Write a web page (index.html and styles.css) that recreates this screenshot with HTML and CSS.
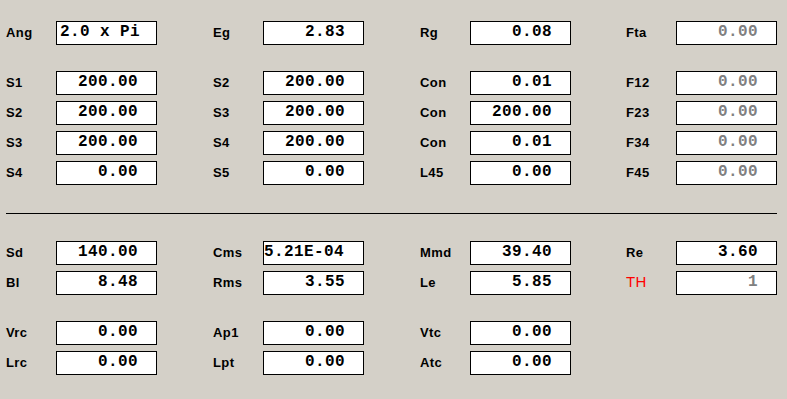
FILE: index.html
```html
<!DOCTYPE html>
<html>
<head>
<meta charset="utf-8">
<link rel="stylesheet" href="styles.css">
</head>
<body>
<div class="panel">
  <div class="group g-top">
    <div class="field"><span class="lbl">Ang</span><span class="box left">2.0 x Pi</span></div>
    <div class="field"><span class="lbl">Eg</span><span class="box">2.83</span></div>
    <div class="field"><span class="lbl">Rg</span><span class="box">0.08</span></div>
    <div class="field"><span class="lbl">Fta</span><span class="box dim">0.00</span></div>
  </div>
  <div class="group g-mid">
    <div class="field"><span class="lbl">S1</span><span class="box">200.00</span></div>
    <div class="field"><span class="lbl">S2</span><span class="box">200.00</span></div>
    <div class="field"><span class="lbl">Con</span><span class="box">0.01</span></div>
    <div class="field"><span class="lbl">F12</span><span class="box dim">0.00</span></div>

    <div class="field"><span class="lbl">S2</span><span class="box">200.00</span></div>
    <div class="field"><span class="lbl">S3</span><span class="box">200.00</span></div>
    <div class="field"><span class="lbl">Con</span><span class="box">200.00</span></div>
    <div class="field"><span class="lbl">F23</span><span class="box dim">0.00</span></div>

    <div class="field"><span class="lbl">S3</span><span class="box">200.00</span></div>
    <div class="field"><span class="lbl">S4</span><span class="box">200.00</span></div>
    <div class="field"><span class="lbl">Con</span><span class="box">0.01</span></div>
    <div class="field"><span class="lbl">F34</span><span class="box dim">0.00</span></div>

    <div class="field"><span class="lbl">S4</span><span class="box">0.00</span></div>
    <div class="field"><span class="lbl">S5</span><span class="box">0.00</span></div>
    <div class="field"><span class="lbl">L45</span><span class="box">0.00</span></div>
    <div class="field"><span class="lbl">F45</span><span class="box dim">0.00</span></div>
  </div>
  <div class="divider"></div>
  <div class="group g-params">
    <div class="field"><span class="lbl">Sd</span><span class="box">140.00</span></div>
    <div class="field"><span class="lbl">Cms</span><span class="box flush">5.21E-04</span></div>
    <div class="field"><span class="lbl">Mmd</span><span class="box">39.40</span></div>
    <div class="field"><span class="lbl">Re</span><span class="box">3.60</span></div>

    <div class="field"><span class="lbl">Bl</span><span class="box">8.48</span></div>
    <div class="field"><span class="lbl">Rms</span><span class="box">3.55</span></div>
    <div class="field"><span class="lbl">Le</span><span class="box">5.85</span></div>
    <div class="field"><span class="lbl red">TH</span><span class="box dim">1</span></div>
  </div>
  <div class="group g-bottom">
    <div class="field"><span class="lbl">Vrc</span><span class="box">0.00</span></div>
    <div class="field"><span class="lbl">Ap1</span><span class="box">0.00</span></div>
    <div class="field"><span class="lbl">Vtc</span><span class="box">0.00</span></div>
    <div class="field empty"></div>

    <div class="field"><span class="lbl">Lrc</span><span class="box">0.00</span></div>
    <div class="field"><span class="lbl">Lpt</span><span class="box">0.00</span></div>
    <div class="field"><span class="lbl">Atc</span><span class="box">0.00</span></div>
    <div class="field empty"></div>
  </div>
</div>
</body>
</html>
```

FILE: styles.css
```css
html, body {
  margin: 0;
  padding: 0;
  background: #d4d0c8;
}

body {
  width: 787px;
  height: 399px;
  overflow: hidden;
}

.panel {
  padding: 21px 10px 0 6px;
}

.group {
  display: grid;
  grid-template-columns: 207px 207px 206px 151px;
  row-gap: 6px;
}

.g-top {
  margin-bottom: 26px;
}

.g-params {
  margin-bottom: 26px;
}

.divider {
  height: 1px;
  width: 771px;
  background: #000;
  margin: 28px 0 27px 0;
}

.field {
  display: flex;
  height: 24px;
}

.lbl {
  width: 50px;
  font-family: "Liberation Sans", Arial, sans-serif;
  font-weight: bold;
  font-size: 13px;
  letter-spacing: 0.4px;
  line-height: 24px;
  color: #000;
}

.lbl.red {
  color: #ff0000;
  font-weight: normal;
  font-size: 15px;
  letter-spacing: 0.3px;
  line-height: 22px;
}

.box {
  box-sizing: border-box;
  width: 101px;
  height: 24px;
  border: 1px solid #000;
  background: #fff;
  font-family: "Liberation Mono", "Courier New", monospace;
  font-weight: bold;
  font-size: 16px;
  letter-spacing: 0.4px;
  line-height: 20px;
  padding: 0 18px 0 2px;
  text-align: right;
  color: #000;
  white-space: pre;
}

.box.left {
  text-align: left;
  padding-left: 3px;
}

.box.flush {
  text-align: left;
  padding-left: 0;
}

.box.dim {
  color: #808080;
}
```
